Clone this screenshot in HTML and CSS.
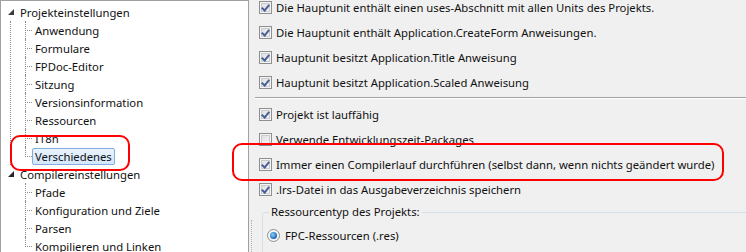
FILE: index.html
```html
<!DOCTYPE html>
<html lang="de">
<head>
    <meta charset="UTF-8">
    <title>Projekteinstellungen</title>
    <link rel="stylesheet" href="styles.css">
</head>
<body>
    <div class="window">
        <!-- Tree of option pages -->
        <div class="tree-panel">
            <ul class="tree">
                <li class="root">
                    <div class="row"><span class="expander"><svg width="6" height="6" viewBox="0 0 6 6"><polygon points="6,0 6,6 0,6" fill="#3c3c3c"/></svg></span><span class="label">Projekteinstellungen</span></div>
                    <ul class="children">
                        <li><span class="label">Anwendung</span></li>
                        <li><span class="label">Formulare</span></li>
                        <li><span class="label">FPDoc-Editor</span></li>
                        <li><span class="label">Sitzung</span></li>
                        <li><span class="label">Versionsinformation</span></li>
                        <li><span class="label">Ressourcen</span></li>
                        <li><span class="label">I18n</span></li>
                        <li><span class="label selected">Verschiedenes</span></li>
                    </ul>
                </li>
                <li class="root">
                    <div class="row"><span class="expander"><svg width="6" height="6" viewBox="0 0 6 6"><polygon points="6,0 6,6 0,6" fill="#262626"/></svg></span><span class="label">Compilereinstellungen</span></div>
                    <ul class="children">
                        <li><span class="label">Pfade</span></li>
                        <li><span class="label">Konfiguration und Ziele</span></li>
                        <li><span class="label">Parsen</span></li>
                        <li><span class="label">Kompilieren und Linken</span></li>
                    </ul>
                </li>
            </ul>
        </div>

        <div class="splitter"><span class="grip"></span></div>

        <!-- Options page: Verschiedenes -->
        <div class="page">
            <div class="option"><span class="check on"></span>Die Hauptunit enthält einen uses-Abschnitt mit allen Units des Projekts.</div>
            <div class="option"><span class="check on"></span>Die Hauptunit enthält Application.CreateForm Anweisungen.</div>
            <div class="option"><span class="check on"></span>Hauptunit besitzt Application.Title Anweisung</div>
            <div class="option"><span class="check on"></span>Hauptunit besitzt Application.Scaled Anweisung</div>
            <div class="separator"></div>
            <div class="option"><span class="check on"></span>Projekt ist lauffähig</div>
            <div class="option"><span class="check"></span>Verwende Entwicklungszeit-Packages</div>
            <div class="option"><span class="check on"></span>Immer einen Compilerlauf durchführen (selbst dann, wenn nichts geändert wurde)</div>
            <div class="option"><span class="check on"></span>.lrs-Datei in das Ausgabeverzeichnis speichern</div>
            <fieldset class="group">
                <legend>Ressourcentyp des Projekts:</legend>
                <div class="option radio-option"><span class="radio on"></span>FPC-Ressourcen (.res)</div>
            </fieldset>
        </div>

        <!-- red hand-drawn marks -->
        <div class="mark mark-tree"></div>
        <div class="mark mark-option"></div>
    </div>
</body>
</html>
```
FILE: styles.css
```css
body {
    margin: 0;
    padding: 0;
    background-color: #f0f0f0;
    font-family: "Noto Sans", "Open Sans", sans-serif;
    font-size: 11.3px;
    color: #111;
    overflow: hidden;
}
.window {
    position: relative;
    display: flex;
    height: 252px;
    overflow: hidden;
}
.tree-panel {
    width: 247px;
    height: 300px;
    flex: none;
    background-color: white;
    border: 1px solid #a0a0a0;
    border-bottom: none;
    padding-top: 2px;
    box-sizing: content-box;
}
.tree, .children {
    list-style: none;
    margin: 0;
    padding: 0;
}
.root {
    position: relative;
}
.root:first-child::after {
    content: '';
    position: absolute;
    left: 9px;
    top: 18px;
    bottom: 0;
    border-left: 1px dotted #8c8c8c;
}
.row {
    display: flex;
    align-items: center;
    height: 18px;
}
.expander {
    display: flex;
    width: 6px;
    height: 6px;
    margin-left: 7px;
    margin-right: 3px;
}
.label {
    display: inline-block;
    line-height: 15px;
    padding: 0 2px;
    border: 1px solid transparent;
    border-radius: 2px;
    white-space: nowrap;
}
.label.selected {
    background: linear-gradient(#eaf3fd, #d3e6fb);
    border-color: #84acdd;
}
.children {
    margin-left: 24px;
}
.children li {
    position: relative;
    height: 18px;
    display: flex;
    align-items: center;
    padding-left: 7px;
}
.children li::before {
    content: '';
    position: absolute;
    left: 0;
    top: 0;
    width: 6px;
    height: 9px;
    border-left: 1px dotted #8c8c8c;
    border-bottom: 1px dotted #8c8c8c;
}
.children li:not(:last-child)::after {
    content: '';
    position: absolute;
    left: 0;
    top: 9px;
    bottom: 0;
    border-left: 1px dotted #8c8c8c;
}
.splitter {
    width: 6px;
    flex: none;
    display: flex;
    justify-content: center;
    padding-top: 220px;
}
.grip {
    width: 1px;
    height: 60px;
    border-left: 1px dotted #b0b0b0;
}
.page {
    flex: 1;
    margin-top: -5px;
    padding-left: 4px;
    min-width: 0;
}
.option {
    display: flex;
    align-items: center;
    height: 25px;
    white-space: nowrap;
}
.check {
    position: relative;
    width: 11px;
    height: 11px;
    flex: none;
    margin-right: 4px;
    border: 1px solid #8e8f8f;
    background: linear-gradient(135deg, #dcdcdc, #f8f8f8);
    box-shadow: inset 0 0 0 1px #f4f4f4, inset 0 0 0 2px #c9ccd1;
}
.check.on::after {
    content: '';
    position: absolute;
    left: 3px;
    top: 1px;
    width: 3px;
    height: 6px;
    border-right: 2px solid #4a5f97;
    border-bottom: 2px solid #4a5f97;
    transform: rotate(40deg);
}
.separator {
    margin: 2px 0 3px -4px;
    height: 0;
    border-top: 1px solid #a0a0a0;
    border-bottom: 1px solid #ffffff;
}
.group {
    margin: 2px -20px 0 3px;
    padding: 0 0 0 4px;
    border: 1px solid #d5dfe5;
    border-radius: 3px;
    height: 60px;
}
.group legend {
    padding: 0 2px;
    margin-left: 2px;
    line-height: 16px;
}
.radio-option {
    height: 24px;
    padding-top: 3px;
}
.radio {
    position: relative;
    width: 11px;
    height: 11px;
    flex: none;
    margin-right: 5px;
    border: 1px solid #8e8f8f;
    border-radius: 50%;
    background: #f4f4f4;
}
.radio.on::after {
    content: '';
    position: absolute;
    left: 2px;
    top: 2px;
    width: 7px;
    height: 7px;
    border-radius: 50%;
    background: radial-gradient(circle at 40% 40%, #8ad2f8, #1a66b5 70%, #0e3c7a);
}
.mark {
    position: absolute;
    border: 2px solid #ff0000;
    border-radius: 10px;
}
.mark-tree {
    left: 10px;
    top: 135px;
    width: 116px;
    height: 32px;
}
.mark-option {
    left: 232px;
    top: 143px;
    width: 488px;
    height: 34px;
}
```
